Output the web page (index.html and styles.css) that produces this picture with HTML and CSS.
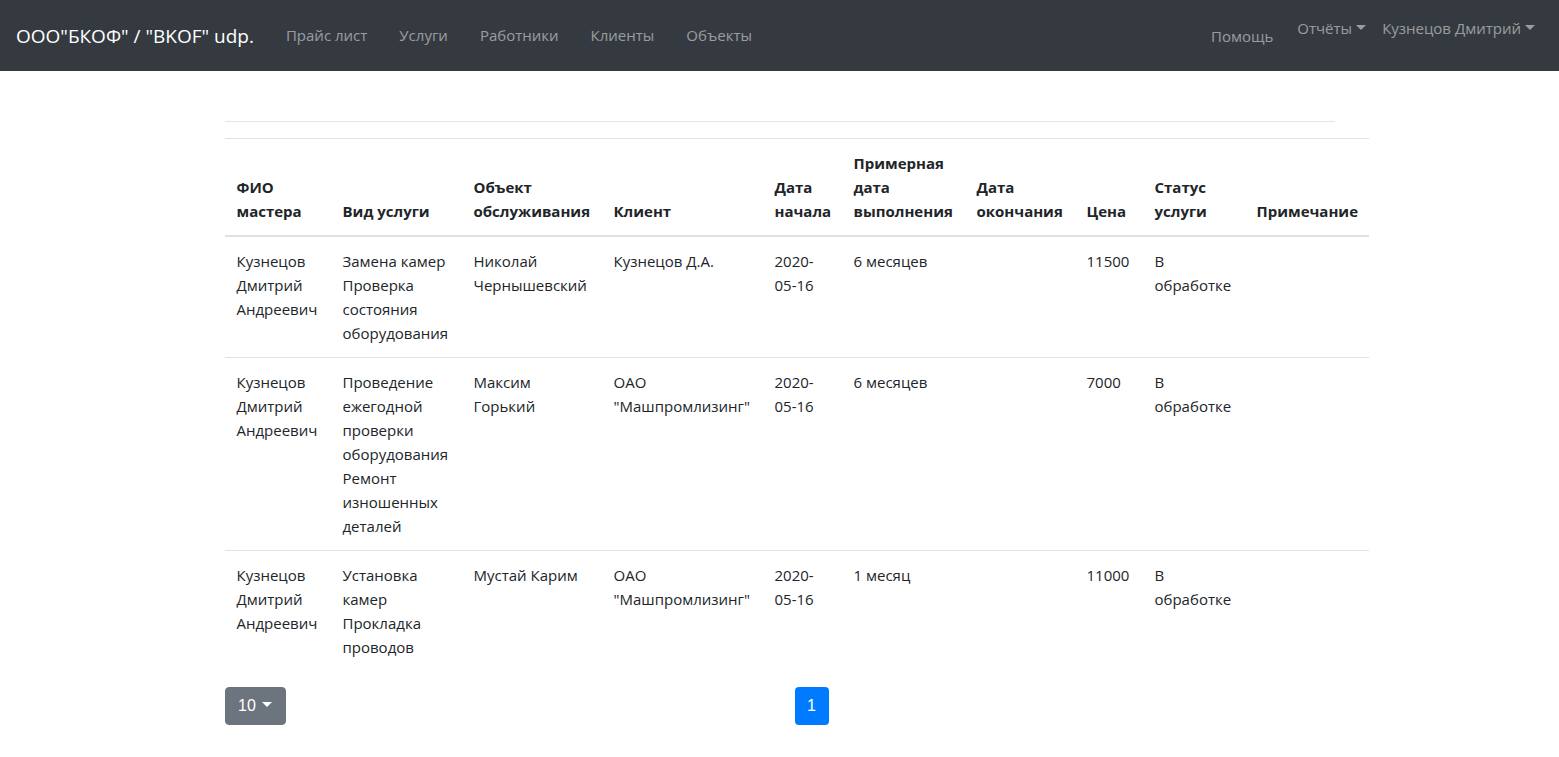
FILE: index.html
```html
<!DOCTYPE html>
<html lang="ru">
<head>
<meta charset="utf-8">
<title>Заказы</title>
<link rel="stylesheet" href="styles.css">
</head>
<body>
<nav class="navbar">
  <a class="brand" href="#">ООО"БКОФ" / "BKOF" udp.</a>
  <ul class="nav-left">
    <li><a class="nav-link" href="#">Прайс лист</a></li>
    <li><a class="nav-link" href="#">Услуги</a></li>
    <li><a class="nav-link" href="#">Работники</a></li>
    <li><a class="nav-link" href="#">Клиенты</a></li>
    <li><a class="nav-link" href="#">Объекты</a></li>
  </ul>
  <div class="nav-right">
    <a class="nav-link help" href="#">Помощь</a>
    <a class="nav-link toggle up" href="#">Отчёты</a>
    <a class="nav-link toggle up" href="#">Кузнецов Дмитрий</a>
  </div>
</nav>
<main class="container">
  <hr class="sep">
  <table class="table">
    <colgroup>
      <col class="c1"><col class="c2"><col class="c3"><col class="c4"><col class="c5">
      <col class="c6"><col class="c7"><col class="c8"><col class="c9"><col class="c10">
    </colgroup>
    <thead>
      <tr>
        <th>ФИО<br>мастера</th>
        <th>Вид услуги</th>
        <th>Объект<br>обслуживания</th>
        <th>Клиент</th>
        <th>Дата<br>начала</th>
        <th>Примерная<br>дата<br>выполнения</th>
        <th>Дата<br>окончания</th>
        <th>Цена</th>
        <th>Статус<br>услуги</th>
        <th>Примечание</th>
      </tr>
    </thead>
    <tbody>
      <tr>
        <td>Кузнецов<br>Дмитрий<br>Андреевич</td>
        <td>Замена камер<br>Проверка<br>состояния<br>оборудования</td>
        <td>Николай<br>Чернышевский</td>
        <td>Кузнецов Д.А.</td>
        <td>2020-<br>05-16</td>
        <td>6 месяцев</td>
        <td></td>
        <td>11500</td>
        <td>В<br>обработке</td>
        <td></td>
      </tr>
      <tr>
        <td>Кузнецов<br>Дмитрий<br>Андреевич</td>
        <td>Проведение<br>ежегодной<br>проверки<br>оборудования<br>Ремонт<br>изношенных<br>деталей</td>
        <td>Максим<br>Горький</td>
        <td>ОАО<br>"Машпромлизинг"</td>
        <td>2020-<br>05-16</td>
        <td>6 месяцев</td>
        <td></td>
        <td>7000</td>
        <td>В<br>обработке</td>
        <td></td>
      </tr>
      <tr>
        <td>Кузнецов<br>Дмитрий<br>Андреевич</td>
        <td>Установка<br>камер<br>Прокладка<br>проводов</td>
        <td>Мустай Карим</td>
        <td>ОАО<br>"Машпромлизинг"</td>
        <td>2020-<br>05-16</td>
        <td>1 месяц</td>
        <td></td>
        <td>11000</td>
        <td>В<br>обработке</td>
        <td></td>
      </tr>
    </tbody>
  </table>
  <div class="footer-bar">
    <button class="btn btn-secondary toggle" type="button">10</button>
    <ul class="pagination">
      <li><a class="page-link active" href="#">1</a></li>
    </ul>
  </div>
</main>
</body>
</html>
```
FILE: styles.css
```css
* { box-sizing: border-box; }
html, body { margin: 0; }
body {
  font-family: "Open Sans", "Noto Sans", "Liberation Sans", sans-serif;
  font-size: 15px;
  line-height: 24px;
  color: #212529;
  background: #fff;
}
a { text-decoration: none; }

.navbar {
  height: 71px;
  background: #343a40;
  display: flex;
  align-items: center;
  padding: 0 16px;
}
.brand {
  color: #fff;
  font-size: 19px;
  line-height: 30px;
  margin-right: 16px;
  white-space: nowrap;
}
.nav-left {
  list-style: none;
  margin: 0;
  padding: 0;
  display: flex;
  position: relative;
  top: -1px;
}
.nav-link {
  display: block;
  color: rgba(255,255,255,.5);
  padding: 8px 16px;
  white-space: nowrap;
}
.nav-right {
  margin-left: auto;
  display: flex;
  align-items: center;
}
.nav-right .nav-link { padding: 8px 8px; }
.nav-right .help { margin-right: 8px; }
.nav-right .up { position: relative; top: -8px; }
.toggle::after {
  content: "";
  display: inline-block;
  margin-left: 4px;
  vertical-align: 4px;
  border-top: 5px solid;
  border-left: 5px solid transparent;
  border-right: 5px solid transparent;
}
.btn.toggle::after { margin-left: 6px; }

.container {
  width: 1140px;
  margin: 0 auto;
  padding: 50px 15px 0;
}
.sep {
  margin: 0 0 16px;
  border: 0;
  border-top: 1px solid rgba(0,0,0,.1);
}
.table {
  border-collapse: collapse;
  table-layout: fixed;
  width: 1144px;
}
.c1 { width: 106px; } .c2 { width: 131px; } .c3 { width: 140px; }
.c4 { width: 161px; } .c5 { width: 79px; } .c6 { width: 123px; }
.c7 { width: 110px; } .c8 { width: 68px; } .c9 { width: 102px; }
.c10 { width: 124px; }
.table th, .table td {
  padding: 12px;
  text-align: left;
  white-space: nowrap;
  vertical-align: top;
  border-top: 1px solid #dee2e6;
}
.table thead th {
  vertical-align: bottom;
  border-bottom: 2px solid #dee2e6;
  font-weight: 700;
}
.table tbody tr:first-child td { border-top: 0; }

.footer-bar {
  display: flex;
  align-items: center;
  margin-top: 16px;
}
.btn {
  font-family: "Liberation Sans", Arial, sans-serif;
  font-size: 16px;
  line-height: 24px;
  width: 61px;
  padding: 6px 0;
  border: 1px solid transparent;
  border-radius: 4px;
  cursor: pointer;
}
.btn-secondary {
  background: #6c757d;
  border-color: #6c757d;
  color: #fff;
}
.pagination {
  list-style: none;
  margin: 0 0 0 509px;
  padding: 0;
  display: flex;
}
.page-link {
  display: block;
  width: 34px;
  height: 38px;
  line-height: 24px;
  padding: 7px 0;
  text-align: center;
  font-family: "Liberation Sans", Arial, sans-serif;
  font-size: 16px;
  color: #fff;
  background: #007bff;
  border-radius: 4px;
}
```
